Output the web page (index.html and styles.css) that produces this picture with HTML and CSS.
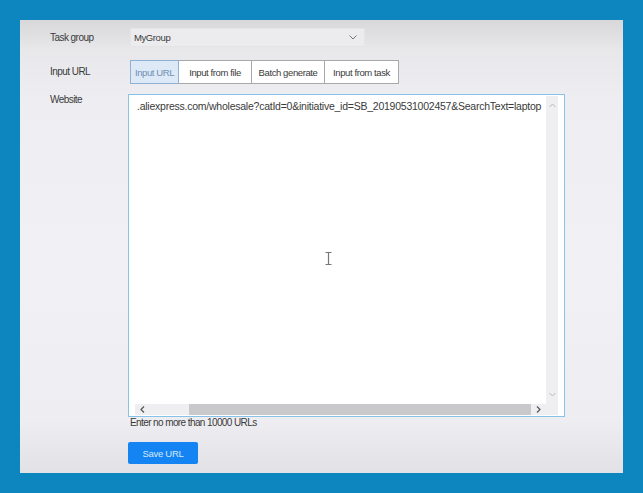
FILE: index.html
```html
<!DOCTYPE html>
<html>
<head>
<meta charset="utf-8">
<link rel="stylesheet" href="styles.css">
</head>
<body>
<div class="panel">
  <div class="form">
    <div class="label l1">Task group</div>
    <div class="select">
      <span>MyGroup</span>
      <svg class="chev" width="8" height="5" viewBox="0 0 8 5"><path d="M0.5 0.5 L4 4 L7.5 0.5" fill="none" stroke="#777" stroke-width="1"/></svg>
    </div>

    <div class="label l2">Input URL</div>
    <div class="tabs">
      <div class="tab active">Input URL</div>
      <div class="tab">Input from file</div>
      <div class="tab">Batch generate</div>
      <div class="tab">Input from task</div>
    </div>

    <div class="label l3">Website</div>
    <div class="urlcol">
      <div class="box">
        <div class="scroller">
          <div class="content">.aliexpress.com/wholesale?catId=0&amp;initiative_id=SB_20190531002457&amp;SearchText=laptop</div>
          <div class="vbar">
            <svg width="7" height="5" viewBox="0 0 7 5"><path d="M0.5 4 L3.5 1 L6.5 4" fill="none" stroke="#b8b8bc" stroke-width="1"/></svg>
            <svg width="7" height="5" viewBox="0 0 7 5"><path d="M0.5 1 L3.5 4 L6.5 1" fill="none" stroke="#b8b8bc" stroke-width="1"/></svg>
          </div>
          <div class="hbar">
            <svg class="arr" width="5" height="7" viewBox="0 0 5 7"><path d="M4 0.5 L1 3.5 L4 6.5" fill="none" stroke="#555" stroke-width="1.2"/></svg>
            <div class="track"><div class="thumb"></div></div>
            <svg class="arr" width="5" height="7" viewBox="0 0 5 7"><path d="M1 0.5 L4 3.5 L1 6.5" fill="none" stroke="#555" stroke-width="1.2"/></svg>
          </div>
          <div class="corner"></div>
        </div>
        <svg class="ibeam" width="7" height="13" viewBox="0 0 7 13"><path d="M0.5 0.5 H6.5 M3.5 0.5 V12.5 M0.5 12.5 H6.5" fill="none" stroke="#777" stroke-width="1.2"/></svg>
      </div>
      <div class="hint">Enter no more than 10000 URLs</div>
      <button class="save">Save URL</button>
    </div>
  </div>
</div>
</body>
</html>
```

FILE: styles.css
```css
html, body {
  margin: 0;
  padding: 0;
}
body {
  background: #0d85be;
  width: 643px;
  height: 493px;
  overflow: hidden;
  font-family: "Liberation Sans", Arial, sans-serif;
  color: #3a3a3a;
}
.panel {
  margin: 20px 0 0 20px;
  width: 603px;
  height: 453px;
  box-sizing: border-box;
  padding: 8px 0 0 30px;
  background: linear-gradient(to bottom, #d8d8db 0px, #e8e8eb 30px, #eeeef2 80px, #f1f1f5 250px, #eeeef2 400px, #e2e2e6 453px);
}
.form {
  display: grid;
  grid-template-columns: 78px 1fr;
  align-items: start;
}
.label {
  font-size: 10px;
  letter-spacing: -0.55px;
  color: #3a3a3a;
  line-height: 12px;
}
.l1 { margin-top: 4px; }
.select {
  margin-left: 2px;
  width: 235px;
  height: 19px;
  box-sizing: border-box;
  display: flex;
  align-items: center;
  justify-content: space-between;
  padding: 0 7px 0 3px;
  background: #ececef;
  border: 1px solid #e4e4e7;
  font-size: 9.5px;
  letter-spacing: -0.4px;
  color: #3a3a3a;
}
.l2 { grid-column: 1; grid-row: 2; align-self: start; margin-top: 19px; }
.tabs {
  grid-column: 2;
  grid-row: 2;
  margin-top: 13px;
  margin-left: 2px;
  display: flex;
  height: 24px;
}
.tab {
  height: 24px;
  box-sizing: border-box;
  border: 1px solid #a8a8ab;
  border-left-width: 0;
  background: #fff;
  font-size: 9.5px;
  letter-spacing: -0.4px;
  color: #3a3a3a;
  display: flex;
  align-items: center;
  justify-content: center;
}
.tab:nth-child(1) { width: 49px; }
.tab:nth-child(2) { width: 73px; }
.tab:nth-child(3) { width: 73px; }
.tab:nth-child(4) { width: 74px; }
.tab.active {
  border: 1px solid #8fb1d3;
  background: #dde9f6;
  color: #6f8fb3;
}
.l3 { margin-top: 10px; }
.urlcol {
  margin-top: 10px;
  display: flex;
  flex-direction: column;
  align-items: flex-start;
}
.box {
  position: relative;
  width: 437px;
  height: 323px;
  box-sizing: border-box;
  border: 1px solid #86c3e6;
  background: #fff;
  padding: 1px 6px 1px 6px;
}
.scroller {
  height: 100%;
  display: grid;
  grid-template-columns: 1fr 12px;
  grid-template-rows: 1fr 11px;
}
.content {
  font-size: 10.5px;
  letter-spacing: -0.24px;
  color: #3a3a3a;
  white-space: nowrap;
  overflow: hidden;
  padding: 4px 0 0 2px;
  line-height: 12px;
}
.vbar {
  background: #efeff1;
  display: flex;
  flex-direction: column;
  justify-content: space-between;
  align-items: center;
  padding: 7px 0 7px;
}
.hbar {
  background: #efeff1;
  display: flex;
  align-items: center;
}
.hbar .arr {
  margin: 0 5px;
  flex: none;
}
.track {
  flex: 1;
  height: 11px;
  padding-left: 39px;
}
.thumb {
  height: 11px;
  background: #c9c9cc;
}
.corner {
  background: #efeff1;
}
.ibeam {
  position: absolute;
  left: 196px;
  top: 157px;
}
.hint {
  font-size: 10px;
  letter-spacing: -0.6px;
  color: #3a3a3a;
  margin: 0 0 0 2px;
  line-height: 12px;
}
.save {
  margin-top: 13px;
  width: 70px;
  height: 22px;
  border: 0;
  border-radius: 2px;
  background: #1384f2;
  color: #d6e8fb;
  font-family: "Liberation Sans", Arial, sans-serif;
  font-size: 9.5px;
  letter-spacing: -0.3px;
  padding: 0;
}
```
